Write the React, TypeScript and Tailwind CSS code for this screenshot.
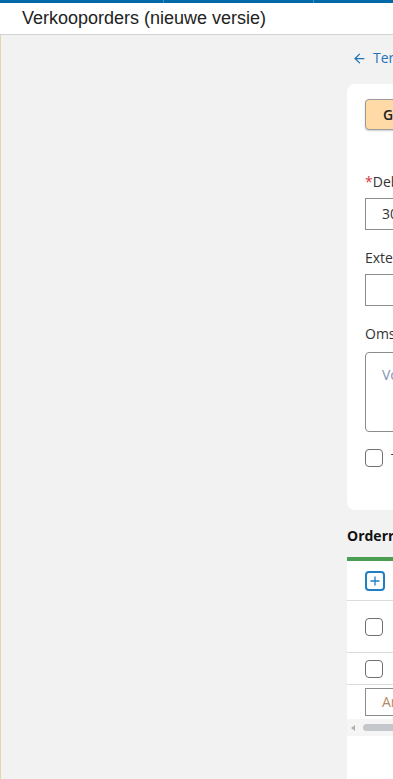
import { ArrowLeft, Plus } from "lucide-react";

const Field = ({ label, required, children }: { label: string; required?: boolean; children: React.ReactNode }) => (
    <div className="mb-[18px]">
        <div className="h-[20px] mb-[6px] text-[14px] leading-[20px] text-[#333]">
            {required && <span className="text-[#d9363e]">*</span>}
            {label}
        </div>
        {children}
    </div>
);

const App = () => {
    return (
        <div className="h-[779px] w-[393px] overflow-hidden bg-[#f2f2f2] font-['Open_Sans',sans-serif]">
            {/* top strip */}
            <div className="flex h-[3px] bg-[#0069a8]">
                <div className="w-[164px] border-r border-[#3f8fc0]" />
                <div className="w-[150px] border-r border-[#3f8fc0]" />
                <div className="grow" />
            </div>
            <div className="h-[32px] bg-white border-b border-[#d2d2d2] pl-[22px] flex items-center">
                <span className="font-['Liberation_Sans',Arial,sans-serif] text-[18px] text-[#222]">Verkooporders (nieuwe versie)</span>
            </div>
            <div className="flex h-[745px] border-l border-[#e6d6ab]">
                <div className="w-[346px] shrink-0" />
                <div className="w-[700px] shrink-0 flex flex-col">
                    <div className="h-[49px] pl-[5px] pt-[13px] flex items-start gap-[6px] text-[14px] leading-[20px] text-[#1f74b8]">
                        <ArrowLeft size={15} strokeWidth={2} className="mt-[3px]" />
                        <span>Terug naar overzicht</span>
                    </div>
                    <div className="rounded-[8px] bg-white px-[18px] pt-[15px] pb-[43px]">
                        <button className="h-[31px] px-[17px] rounded-[4px] border border-[#9a9a9a] bg-[#ffdaa6] text-[14px] font-semibold text-[#222] shadow-[0_1px_2px_rgba(0,0,0,0.2)]">
                            Gereed
                        </button>
                        <div className="h-[42px]" />
                        <Field label="Debiteur" required>
                            <div className="h-[32px] w-[400px] border border-[#8c8c8c] px-[16px] text-[14px] leading-[30px] text-[#333]">
                                30001
                            </div>
                        </Field>
                        <Field label="Externe referentie">
                            <div className="h-[32px] w-[400px] border border-[#8c8c8c]" />
                        </Field>
                        <div className="h-[20px] mb-[8px] text-[14px] leading-[20px] text-[#333]">Omschrijving</div>
                        <div className="h-[80px] w-[400px] rounded-[4px] border border-[#8c8c8c] px-[16px] pt-[11px] text-[14px] text-[#7f95b8]">
                            Voer een omschrijving in
                        </div>
                        <div className="mt-[17px] h-[18px] flex items-center gap-[8px] text-[14px] text-[#333]">
                            <div className="w-[18px] h-[18px] rounded-[4px] border border-[#6f6f6f] bg-white" />
                            <span>Tonen op pakbon</span>
                        </div>
                    </div>
                    <div className="h-[47px] pt-[16px] text-[14px] leading-[20px] font-bold text-[#111]">Orderregels</div>
                    <div className="grow bg-white border-t-[4px] border-[#4b9d52]">
                        <div className="h-[40px] pl-[18px] flex items-center border-b border-[#dcdcdc]">
                            <div className="w-[20px] h-[20px] rounded-[4px] border-2 border-[#1f7fc4] flex items-center justify-center text-[#1f7fc4]">
                                <Plus size={14} strokeWidth={2.25} />
                            </div>
                        </div>
                        <div className="h-[52px] pl-[18px] flex items-center border-b border-[#dcdcdc]">
                            <div className="w-[18px] h-[18px] rounded-[4px] border border-[#6f6f6f]" />
                        </div>
                        <div className="h-[32px] pl-[18px] flex items-center border-b border-[#dcdcdc]">
                            <div className="w-[18px] h-[18px] rounded-[4px] border border-[#6f6f6f]" />
                        </div>
                        <div className="h-[34px] pl-[18px] flex items-center">
                            <div className="h-[28px] w-[200px] border border-[#8c8c8c] px-[16px] text-[14px] leading-[26px] text-[#b48a6a]">
                                Artikel
                            </div>
                        </div>
                        <div className="h-[17px] bg-[#f5f5f5] flex items-center">
                            <span className="ml-[4px] w-0 h-0 border-y-[3px] border-y-transparent border-r-[4px] border-r-[#b0b0b0]" />
                            <div className="ml-[8px] h-[7px] w-[300px] rounded-full bg-[#c4c7cc]" />
                        </div>
                    </div>
                </div>
            </div>
        </div>
    );
};

export default App;
